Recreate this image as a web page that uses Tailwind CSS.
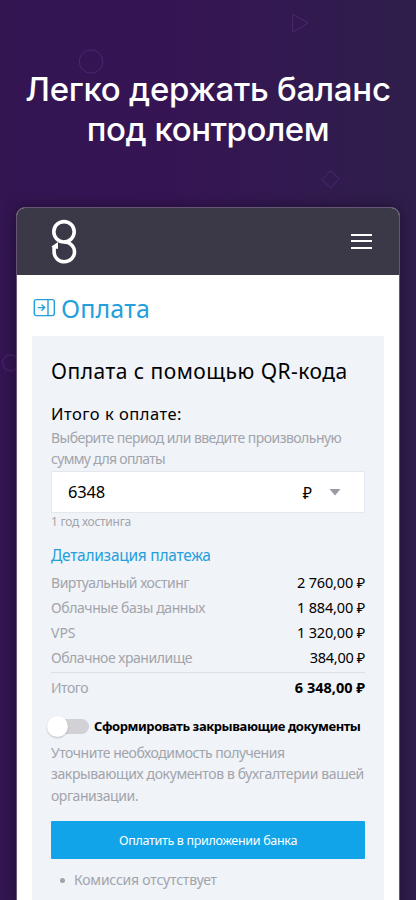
<!DOCTYPE html>
<html lang="ru">
<head>
<meta charset="utf-8">
<title>Оплата</title>
<script src="https://cdn.jsdelivr.net/npm/@tailwindcss/browser@4"></script>
</head>
<body class="overflow-hidden">
<div class="relative flex h-[900px] w-[416px] flex-col overflow-hidden bg-linear-to-r from-[#331552] from-0% via-[#361454] via-40% to-[#2e1e4b] font-['Noto_Sans','Open_Sans',sans-serif] whitespace-nowrap">
  <!-- background shapes -->
  <svg class="absolute inset-0" width="416" height="900" fill="none" stroke="#4a2873" stroke-width="1">
    <circle cx="91" cy="61.5" r="11.7"/>
    <path d="M292.7 14.3v17.8l15.6-9.2z"/>
    <path d="M330 170.8l9.3 7.8-8.3 9.2-9.3-7.8z"/>
    <circle cx="10.5" cy="362.8" r="8"/>
  </svg>
  <h1 class="relative h-[207px] shrink-0 pt-[69px] text-center font-['Inter',sans-serif] text-[33px] leading-[40px] font-medium text-white"><span class="block tracking-[-0.28px]">Легко держать баланс</span><span class="block tracking-[-0.45px]">под контролем</span></h1>

  <main class="relative ml-4 flex h-[700px] w-[384px] shrink-0 flex-col overflow-hidden rounded-t-[9px] border border-b-0 border-[#655775] bg-white shadow-[0_0_14px_rgba(0,0,0,0.4)]">
    <header class="flex h-[67px] shrink-0 items-center justify-between bg-[#3b3847] pr-[27px] pl-[33px]">
      <svg width="28" height="46" viewBox="0 0 28 46" fill="none" stroke="#fff" stroke-width="3.6">
        <circle cx="14" cy="12.8" r="10.2"/>
        <path d="M14 23a10.2 9.9 0 1 1-9.9 9.9V27"/>
        <path d="M1.4 27.6L8 23v6.8H5z" fill="#fff" stroke="none"/>
      </svg>
      <div class="-mt-px flex flex-col gap-[4.5px]">
        <span class="h-[2px] w-[21px] bg-white"></span>
        <span class="h-[2px] w-[21px] bg-white"></span>
        <span class="h-[2px] w-[21px] bg-white"></span>
      </div>
    </header>
    <div class="flex h-[61px] shrink-0 items-center gap-[5px] pl-4 text-[#249fdc]">
      <svg class="mt-1" width="23" height="20" viewBox="0 0 23 20" fill="none" stroke="currentColor" stroke-width="1.4" stroke-linecap="round" stroke-linejoin="round">
        <rect x="1.3" y="1.6" width="20" height="16" rx="2"/>
        <path d="M15 1.6v16M5.2 9.6h6.4M9 6.9l2.7 2.7L9 12.3"/>
      </svg>
      <h2 class="pt-[4px] text-[25px] leading-8 tracking-[0.16px]">Оплата</h2>
    </div>

    <section class="ml-[15px] flex w-[352px] grow flex-col bg-[#f0f3f8] px-[19px] pt-[21px] text-[14px] text-[#a2a4ab]">
      <h3 class="h-[46px] text-[21px] leading-7 tracking-[0.48px] text-black">Оплата с помощью QR-кода</h3>
      <h4 class="h-[24px] text-[16.5px] leading-[21px] tracking-[0.5px] text-black">Итого к оплате:</h4>
      <p class="h-[44px] leading-[21px]"><span class="block tracking-[-0.54px]">Выберите период или введите произвольную</span><span class="block tracking-[-0.68px]">сумму для оплаты</span></p>
      <div class="flex h-[42px] items-center border border-[#e4e7ee] bg-white pt-px pr-[23px] pl-4 text-[16.5px] text-black">
        <span class="grow tracking-[-0.2px]">6348</span>
        <span class="mr-[17px] text-[16px]">₽</span>
        <svg class="-mt-[2px]" width="12" height="8" viewBox="0 0 12 8"><path d="M.5 1h11L6 7.5z" fill="#9a9aa2"/></svg>
      </div>
      <p class="mt-px h-[31px] text-[12px] leading-4 tracking-[-0.27px]">1 год хостинга</p>
      <h4 class="h-[25px] text-[15.5px] leading-5 tracking-[-0.27px] text-[#249fdc]">Детализация платежа</h4>
      <dl class="flex flex-col leading-[25px]">
        <div class="flex justify-between"><dt class="tracking-[-0.47px]">Виртуальный хостинг</dt><dd class="text-[14.5px] tracking-[-0.16px] text-black">2 760,00 ₽</dd></div>
        <div class="flex justify-between"><dt class="tracking-[-0.42px]">Облачные базы данных</dt><dd class="text-[14.5px] tracking-[-0.16px] text-black">1 884,00 ₽</dd></div>
        <div class="flex justify-between"><dt>VPS</dt><dd class="text-[14.5px] tracking-[-0.16px] text-black">1 320,00 ₽</dd></div>
        <div class="flex h-[27px] justify-between"><dt class="tracking-[-0.47px]">Облачное хранилище</dt><dd class="text-[14.5px] tracking-[-0.3px] text-black">384,00 ₽</dd></div>
        <div class="flex h-[41px] justify-between border-t border-[#dcdfe5] pt-[2px]"><dt class="tracking-[-0.52px]">Итого</dt><dd class="text-[14.5px] font-bold text-black">6 348,00 ₽</dd></div>
      </dl>
      <div class="-ml-1 flex h-[27px] items-center">
        <div class="flex h-[15px] w-[42px] items-center rounded-full bg-linear-to-r from-transparent from-20% to-[#d1d1d6] to-20%"><span class="size-[21px] shrink-0 rounded-full bg-white shadow-[0_1px_2px_rgba(0,0,0,0.22)]"></span></div>
        <span class="ml-[5px] text-[13px] font-bold tracking-[-0.43px] text-black">Сформировать закрывающие документы</span>
      </div>
      <p class="mt-[2px] h-[79px] leading-[21.4px]"><span class="block tracking-[-0.47px]">Уточните необходимость получения</span><span class="block tracking-[-0.38px]">закрывающих документов в бухгалтерии вашей</span><span class="block tracking-[-0.45px]">организации.</span></p>
      <button class="h-[38px] shrink-0 rounded-[1px] bg-[#11a4e9] pt-[2px] text-[12.5px] tracking-[-0.31px] text-white">Оплатить в приложении банка</button>
      <ul class="pt-[10px] pl-[9px]"><li class="flex items-center gap-[9px] leading-[22px]"><span class="size-[5px] rounded-full bg-[#a2a4ab]"></span><span class="tracking-[-0.22px]">Комиссия отсутствует</span></li></ul>
    </section>
  </main>
</div>
</body>
</html>
